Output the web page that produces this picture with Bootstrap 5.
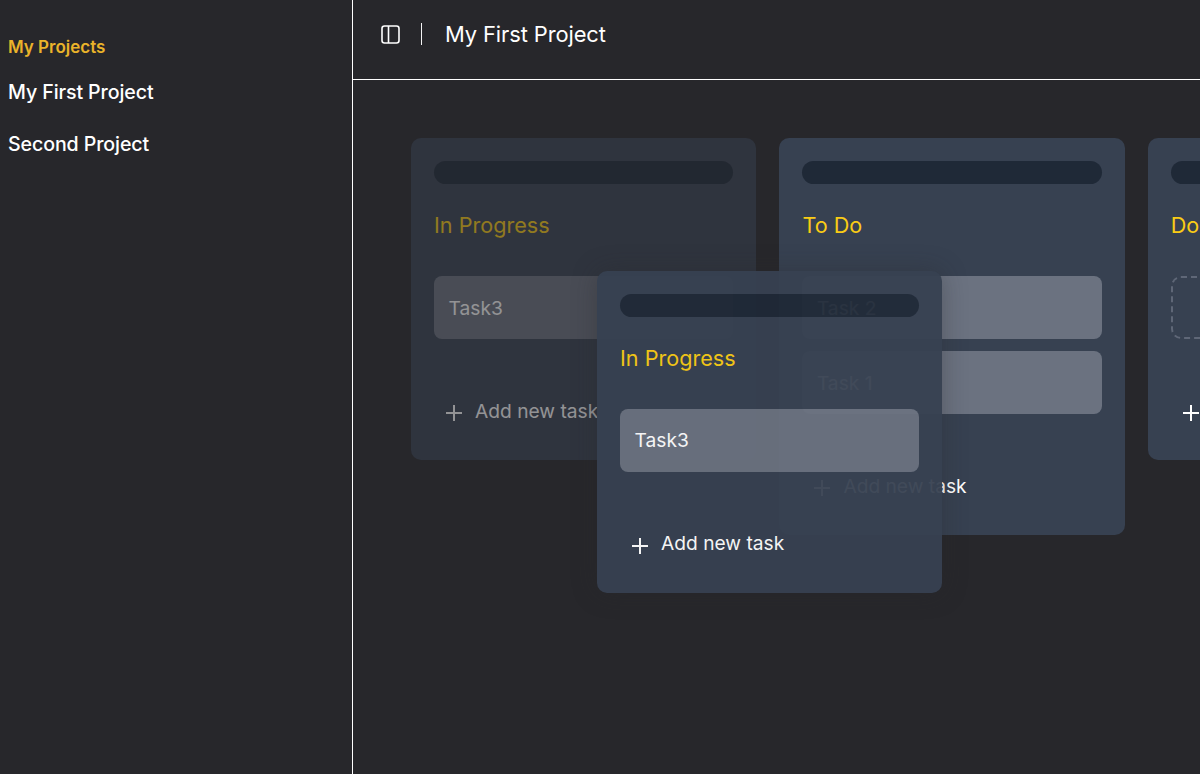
<!DOCTYPE html>
<html lang="en">
<head>
  <meta charset="UTF-8">
  <meta name="viewport" content="width=device-width, initial-scale=1.0">
  <title>My First Project</title>
  <link href="https://cdn.jsdelivr.net/npm/bootstrap@5.3.1/dist/css/bootstrap.min.css" rel="stylesheet">
  <style>
    html, body { height: 100%; }
    body {
      background: #27272b;
      color: #fff;
      font-family: Inter, "Noto Sans", sans-serif;
      overflow: hidden;
    }
    .side-panel {
      width: 353px;
      flex: none;
      padding: 37px 8px 0;
      border-right: 1px solid #fff;
    }
    .side-heading { font-size: 17px; font-weight: 600; line-height: 21px; color: #eab32a; margin-bottom: 19px; }
    .side-link { font-size: 19.6px; font-weight: 500; line-height: 30px; color: #fff; margin-bottom: 22px; letter-spacing: -.1px; }
    .top-bar {
      height: 80px;
      padding: 0 27px 11px 28px;
      border-bottom: 1px solid #fff;
    }
    .bar-divider { width: 1px; height: 22px; background: #f4f4f5; margin: 0 23px 0 21px; }
    .project-title { font-size: 21.9px; line-height: 30px; letter-spacing: -.1px; }
    .board { padding: 58px 0 0 58px; gap: 23px; }
    .lane {
      width: 345.4px;
      flex: none;
      padding: 23px 23px 25px;
      background: #374151;
      border-radius: 10px;
    }
    .lane-handle { height: 23px; background: #1f2937; border-radius: 12px; }
    .lane-title { font-size: 21.6px; line-height: 32px; color: #facc15; margin: 25px 0 35px; }
    .task-list { gap: 12px; }
    .task-item {
      height: 63px;
      padding: 1px 14.5px 0;
      background: #6b7280;
      border-radius: 8px;
      font-size: 19.2px;
      color: #fff;
    }
    .task-empty { height: 63px; border: 2px dashed #5f6777; border-radius: 10px; }
    .add-task { height: 48px; margin-top: 48px; padding-left: 12px; font-size: 19.2px; gap: 13px; color: #fff; }
    .add-task svg { margin-top: 4px; }
    .lane-source { opacity: .5; }
    .lane-drag {
      position: absolute;
      left: 244px;
      top: 270.5px;
      opacity: .95;
      box-shadow: 0 0 24px rgba(39, 39, 43, .35);
    }
  </style>
</head>
<body>
  <div class="d-flex h-100">
    <!-- Sidebar -->
    <aside class="side-panel">
      <div class="side-heading">My Projects</div>
      <div class="side-link">My First Project</div>
      <div class="side-link">Second Project</div>
    </aside>

    <main class="flex-grow-1 overflow-hidden position-relative">
      <header class="top-bar d-flex align-items-center">
        <svg width="19" height="19" viewBox="0 0 19 19" fill="none" stroke="#fff" stroke-width="1.6">
          <rect x="1" y="1" width="17" height="17" rx="2.5"/>
          <line x1="7.5" y1="1" x2="7.5" y2="18"/>
        </svg>
        <span class="bar-divider"></span>
        <span class="project-title">My First Project</span>
      </header>

      <!-- Columns -->
      <div class="board d-flex align-items-start">
        <section class="lane lane-source">
          <div class="lane-handle"></div>
          <div class="lane-title">In Progress</div>
          <div class="task-list d-flex flex-column">
            <div class="task-item d-flex align-items-center">Task3</div>
          </div>
          <div class="add-task d-flex align-items-center">
            <svg width="16" height="16" viewBox="0 0 16 16" stroke="#fff" stroke-width="2"><path d="M8 0v16M0 8h16"/></svg>
            <span>Add new task</span>
          </div>
        </section>

        <section class="lane">
          <div class="lane-handle"></div>
          <div class="lane-title">To Do</div>
          <div class="task-list d-flex flex-column">
            <div class="task-item d-flex align-items-center">Task 2</div>
            <div class="task-item d-flex align-items-center">Task 1</div>
          </div>
          <div class="add-task d-flex align-items-center">
            <svg width="16" height="16" viewBox="0 0 16 16" stroke="#fff" stroke-width="2"><path d="M8 0v16M0 8h16"/></svg>
            <span>Add new task</span>
          </div>
        </section>

        <section class="lane">
          <div class="lane-handle"></div>
          <div class="lane-title">Done</div>
          <div class="task-list d-flex flex-column">
            <div class="task-empty"></div>
          </div>
          <div class="add-task d-flex align-items-center">
            <svg width="16" height="16" viewBox="0 0 16 16" stroke="#fff" stroke-width="2"><path d="M8 0v16M0 8h16"/></svg>
            <span>Add new task</span>
          </div>
        </section>
      </div>

      <!-- Column being dragged -->
      <section class="lane lane-drag">
        <div class="lane-handle"></div>
        <div class="lane-title">In Progress</div>
        <div class="task-list d-flex flex-column">
          <div class="task-item d-flex align-items-center">Task3</div>
        </div>
        <div class="add-task d-flex align-items-center">
          <svg width="16" height="16" viewBox="0 0 16 16" stroke="#fff" stroke-width="2"><path d="M8 0v16M0 8h16"/></svg>
          <span>Add new task</span>
        </div>
      </section>
    </main>
  </div>
  <script src="https://cdn.jsdelivr.net/npm/bootstrap@5.3.1/dist/js/bootstrap.bundle.min.js"></script>
</body>
</html>
